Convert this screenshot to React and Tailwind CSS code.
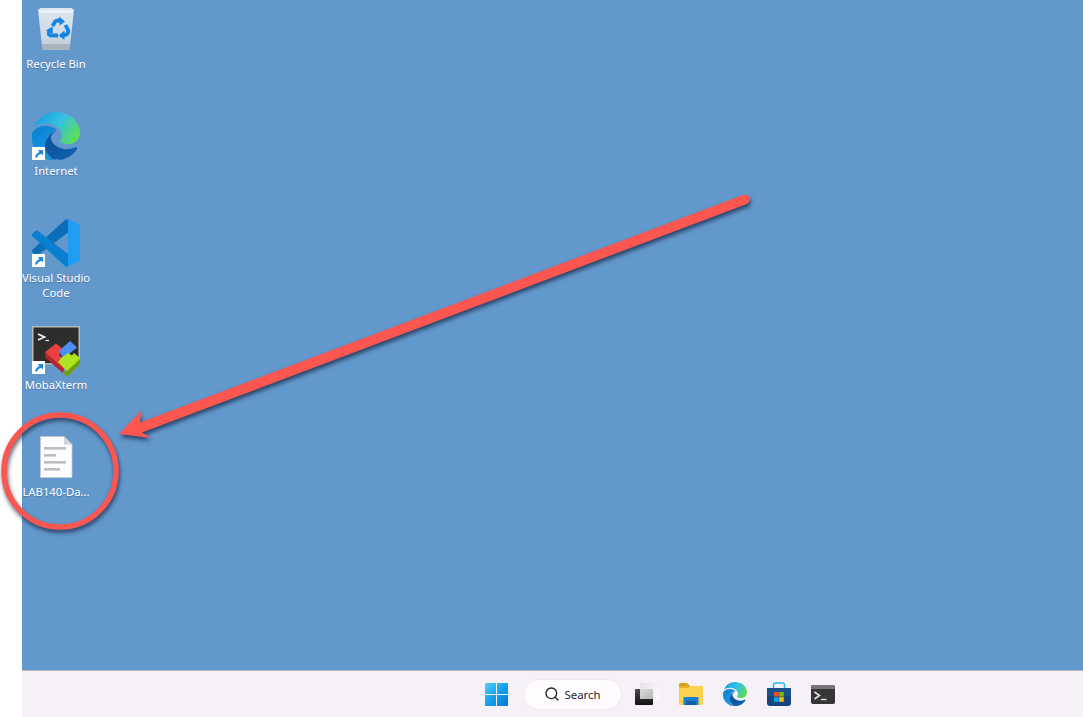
import { Search } from "lucide-react";

const EDGE_WAVE = "M21.86 17.86q.14 0 .25.12.1.13.1.25t-.11.33l-.32.46-.43.53-.44.5q-.21.25-.38.42l-.22.23q-.58.53-1.34 1.04-.76.51-1.6.91-.86.4-1.74.64t-1.67.24q-.9 0-1.69-.28-.8-.28-1.48-.78-.68-.5-1.22-1.17-.53-.66-.92-1.44-.38-.77-.58-1.6-.2-.83-.2-1.67 0-1 .32-1.96.33-.97.87-1.8.14.95.55 1.77.41.82 1.02 1.5.6.68 1.38 1.21.78.54 1.64.9.86.36 1.77.56.92.2 1.8.2 1.12 0 2.18-.24 1.06-.23 2.06-.72l.2-.1.2-.05z";
const EDGE_LEFT = "M6.36 16.59q0 1.1.27 2.15.27 1.06.78 2.03.51.96 1.24 1.77.74.82 1.66 1.4-1.47-.2-2.8-.74-1.33-.55-2.48-1.37-1.15-.83-2.08-1.9-.92-1.07-1.58-2.33T.36 14.94Q0 13.54 0 12.06q0-.81.32-1.49.31-.68.83-1.23.53-.55 1.2-.96.66-.4 1.35-.66.74-.27 1.5-.39.78-.12 1.55-.12.7 0 1.42.1.72.12 1.4.35.68.23 1.32.57.63.35 1.16.83-.35 0-.7.07-.33.07-.65.23v-.02q-.63.28-1.2.74-.57.46-1.05 1.04-.48.58-.87 1.26-.38.67-.65 1.39-.27.71-.42 1.44-.15.72-.15 1.38z";
const EDGE_TOP = "M11.96.06q1.7 0 3.33.39 1.63.38 3.07 1.15 1.43.77 2.62 1.93 1.18 1.16 1.98 2.7.49.94.76 1.96.28 1 .28 2.08 0 .89-.23 1.7-.24.8-.69 1.48-.45.68-1.1 1.22-.64.53-1.45.88-.54.24-1.11.36-.58.13-1.16.13-.42 0-.97-.03-.54-.03-1.1-.12-.55-.1-1.05-.28-.5-.19-.84-.5-.12-.09-.23-.24-.1-.16-.1-.33 0-.15.16-.35.16-.2.35-.5.2-.28.36-.68.16-.4.16-.95 0-1.06-.4-1.96-.4-.91-1.06-1.64-.66-.74-1.52-1.28-.86-.55-1.79-.89-.84-.3-1.72-.44-.87-.14-1.76-.14-1.55 0-3.06.45T.94 7.55q.71-1.74 1.81-3.13 1.1-1.38 2.52-2.35Q6.68 1.1 8.37.58q1.7-.52 3.58-.52Z";

function EdgeIcon({ id, className }) {
  return (
    <svg viewBox="0 0 24 24" className={className}>
      <defs>
        <linearGradient id={`${id}-top`} x1="0" y1="0.2" x2="1" y2="0.7">
          <stop offset="0" stopColor="#1b9de2" />
          <stop offset="0.5" stopColor="#35c1e1" />
          <stop offset="1" stopColor="#5ee04f" />
        </linearGradient>
        <linearGradient id={`${id}-left`} x1="0.2" y1="0" x2="0.7" y2="1">
          <stop offset="0" stopColor="#0a7fd4" />
          <stop offset="1" stopColor="#1a9fe6" />
        </linearGradient>
        <linearGradient id={`${id}-wave`} x1="0" y1="0" x2="1" y2="1">
          <stop offset="0" stopColor="#0c4f96" />
          <stop offset="1" stopColor="#0f66b4" />
        </linearGradient>
      </defs>
      <path d={EDGE_LEFT} fill={`url(#${id}-left)`} stroke="#0f86d8" strokeWidth="0.5" />
      <path d="M12.5 9.3 Q7.5 10.5 6.4 16.6 Q6.6 21 11 23.9 L14 23 Q9.5 20 8.6 15.5 Q9 11 12.5 9.3 Z" fill="#0c5aa6" />
      <path d={EDGE_WAVE} fill={`url(#${id}-wave)`} stroke="#0c5aa6" strokeWidth="0.6" />
      <path d={EDGE_TOP} fill={`url(#${id}-top)`} />
    </svg>
  );
}

function RecycleBinIcon() {
  return (
    <svg viewBox="0 0 48 48" className="h-12 w-12">
      <defs>
        <linearGradient id="bin-body" x1="0" y1="0" x2="0" y2="1">
          <stop offset="0" stopColor="#dde7f0" />
          <stop offset="0.7" stopColor="#cbd8e4" />
          <stop offset="1" stopColor="#bcc9d5" />
        </linearGradient>
      </defs>
      <path d="M6 4.5 L9 3 H39 L42 4.5 L38 41 Q37.8 45 35 45 H13 Q10.2 45 10 41 Z" fill="url(#bin-body)" />
      <path d="M7 5 L41 5 L40.5 8 L7.5 8 Z" fill="#eef3f8" opacity="0.8" />
      <path d="M10 39 H38 L37.6 45 H10.4 Z" fill="#aab4bd" />
      <g fill="none" stroke="#1285e6" strokeWidth="3.8">
        <path d="M20.5 21 L23 16.8 Q24 15.5 26 15.5 H28" />
        <path d="M33.5 20 L36 25 Q37 28.5 33.5 30 H32" />
        <path d="M26 30.5 H19 Q15.5 30 17 27 L18 25" />
      </g>
      <g fill="#1285e6">
        <path d="M27 11.5 L33 16.5 L27.5 20.5 Z" />
        <path d="M32.5 25.5 L26.5 30.5 L32.5 35 Z" />
        <path d="M14 25.5 L20.5 21.5 L21 28.5 Z" />
      </g>
    </svg>
  );
}

function VsCodeIcon() {
  return (
    <svg viewBox="0 0 24 24" className="h-12 w-12">
      <path d="M23.15 2.587L18.21.21a1.494 1.494 0 0 0-1.705.29L.327 15.26a1 1 0 0 0 .001 1.479L1.65 17.94a.999.999 0 0 0 1.276.057L23 3z" fill="#0a6fb8" />
      <path d="M.327 7.261A1 1 0 0 0 .326 8.74L16.5 23.5a1.492 1.492 0 0 0 1.704.29L22 20 L18.004 17.448 2.926 6.003a.999.999 0 0 0-1.276.057z" fill="#0a7fd0" />
      <path d="M18.21.21a1.494 1.494 0 0 0-1.705.29C17.2 -.1 18 .5 18 1.4V22.6c0 .9-.8 1.5-1.5.9a1.492 1.492 0 0 0 1.704.29l4.942-2.377A1.5 1.5 0 0 0 24 20.06V3.939a1.5 1.5 0 0 0-.85-1.352z" fill="#1f9df2" />
    </svg>
  );
}

function MobaIcon() {
  return (
    <svg viewBox="0 0 48 48" className="h-12 w-12 overflow-visible">
      <rect x="0.75" y="0.75" width="46.5" height="37" fill="#2d2e2c" stroke="#b9b9b6" strokeWidth="1.5" />
      <path d="M6 8 L12.5 11 L6 14" fill="none" stroke="#f2f2f2" strokeWidth="1.7" />
      <path d="M13.5 14.5 H17" stroke="#f2f2f2" strokeWidth="1.2" />
      {/* red piece */}
      <path d="M13 26 L13.5 32 L31 47 L33 40 Z" fill="#b3262b" />
      <path d="M13 26 L24 17.5 L31 23 L27 29 L36 36 L32 43 Z" fill="#e8403f" />
      {/* blue piece */}
      <path d="M27 25 L38 15 L45 21.5 L37 28 L36 31 L31 32 Z" fill="#4a90f2" />
      {/* lime piece */}
      <path d="M35 44 L48 32 L48 38 L35 51 L31 46 Z" fill="#6f9f10" />
      <path d="M29 32 L36 27 L40 29.5 L42 27 L48.5 32.5 L35 45 L26 36 Z" fill="#aee31f" />
    </svg>
  );
}

function FileIcon() {
  return (
    <svg viewBox="0 0 48 48" className="h-12 w-12">
      <path d="M8.5 3.5 H32 L40 11.5 V44.5 H8.5 Z" fill="#fdfcfe" stroke="#c9c9cc" strokeWidth="0.8" />
      <path d="M32 3.5 V11.5 H40 Z" fill="#d4d4d6" />
      <rect x="12" y="14" width="22" height="2.6" fill="#bcbdc0" />
      <rect x="12" y="21" width="12" height="2.6" fill="#bcbdc0" />
      <rect x="12" y="28" width="22" height="2.6" fill="#bcbdc0" />
      <rect x="12" y="35" width="16" height="2.6" fill="#bcbdc0" />
    </svg>
  );
}

function ShortcutBadge() {
  return (
    <span className="absolute bottom-0 left-0 flex h-[13px] w-[13px] items-center justify-center bg-white">
      <svg viewBox="0 0 13 13" className="h-[13px] w-[13px]">
        <path d="M3 10.5 Q3.5 6.5 7.5 5 L6 3 H11 V8.5 L9.3 6.8 Q6 7.5 5 10.5 Z" fill="#1a86e0" />
      </svg>
    </span>
  );
}

function DesktopIcon({ label, shortcut, children }) {
  return (
    <div className="flex h-[107px] w-[68px] flex-col items-center">
      <div className="relative h-12 w-12">
        {children}
        {shortcut && <ShortcutBadge />}
      </div>
      <span className="mt-[3px] whitespace-nowrap text-center text-[11.3px] leading-[15px] text-white [text-shadow:0_1px_1px_rgba(30,60,100,0.35)]">
        {label}
      </span>
    </div>
  );
}

function StartIcon() {
  return (
    <svg viewBox="0 0 23 23" className="h-[23px] w-[23px]">
      <defs>
        <linearGradient id="start-fill" x1="0" y1="0" x2="1" y2="1">
          <stop offset="0" stopColor="#52d0fb" />
          <stop offset="0.5" stopColor="#14a0ee" />
          <stop offset="1" stopColor="#0578d4" />
        </linearGradient>
      </defs>
      <path d="M1 0 H11 V11 H0 V1 Q0 0 1 0 Z M12 0 H22 Q23 0 23 1 V11 H12 Z M0 12 H11 V23 H1 Q0 23 0 22 Z M12 12 H23 V22 Q23 23 22 23 H12 Z" fill="url(#start-fill)" />
    </svg>
  );
}

function TaskViewIcon() {
  return (
    <svg viewBox="0 0 24 22" className="h-[22px] w-6">
      <defs>
        <linearGradient id="tv-dark" x1="0" y1="0" x2="0" y2="1">
          <stop offset="0" stopColor="#4a4a4a" />
          <stop offset="1" stopColor="#111111" />
        </linearGradient>
        <linearGradient id="tv-light" x1="0" y1="0" x2="1" y2="1">
          <stop offset="0" stopColor="#e6e4e7" />
          <stop offset="1" stopColor="#fbfafb" />
        </linearGradient>
        <linearGradient id="tv-mid" x1="0" y1="0" x2="1" y2="1">
          <stop offset="0" stopColor="#dcdcdc" />
          <stop offset="1" stopColor="#b4b4b4" />
        </linearGradient>
      </defs>
      <rect x="0" y="6" width="18" height="16" rx="1" fill="url(#tv-dark)" />
      <rect x="5" y="0" width="19" height="16" rx="1" fill="url(#tv-light)" />
      <rect x="5" y="6" width="13" height="10" fill="url(#tv-mid)" />
    </svg>
  );
}

function ExplorerIcon() {
  return (
    <svg viewBox="0 0 24 22" className="h-[22px] w-6">
      <path d="M0 1.5 Q0 0 1.5 0 H8 L11 3 H0 Z" fill="#d9a013" />
      <path d="M0 3 H10 L12 4 H24 V6 H0 Z" fill="#e6b12c" />
      <path d="M0 5 H9 L12 3 H23 Q24 3 24 4 V21 Q24 22 23 22 H1 Q0 22 0 21 Z" fill="#fbd24d" />
      <path d="M4.5 22 V15 Q4.5 14 5.5 14 H18.5 Q19.5 14 19.5 15 V22 Z" fill="#1b7fcf" />
      <rect x="7" y="18" width="10" height="4" fill="#0f5fa8" />
    </svg>
  );
}

function StoreIcon() {
  return (
    <svg viewBox="0 0 24 24" className="h-6 w-6">
      <path d="M6.5 7 V3 Q6.5 1 8.5 1 H15.5 Q17.5 1 17.5 3 V7" fill="none" stroke="#2ab7ef" strokeWidth="1.5" />
      <path d="M0 6 H24 V21 Q24 24 21 24 H3 Q0 24 0 21 Z" fill="#15467c" />
      <path d="M0 6 H24 V14 H0 Z" fill="#1c5a98" opacity="0.6" />
      <rect x="7" y="10" width="4.6" height="4.6" fill="#f25022" />
      <rect x="12.2" y="10" width="4.6" height="4.6" fill="#7fba00" />
      <rect x="7" y="15.2" width="4.6" height="4.6" fill="#00a4ef" />
      <rect x="12.2" y="15.2" width="4.6" height="4.6" fill="#ffb900" />
    </svg>
  );
}

function TerminalIcon() {
  return (
    <svg viewBox="0 0 24 19" className="h-[19px] w-6">
      <rect x="0" y="0" width="24" height="19" rx="2" fill="#363636" />
      <path d="M0 4 V2 Q0 0 2 0 H22 Q24 0 24 2 V4 Z" fill="#767676" />
      <path d="M3.5 7 L8.5 10.5 L3.5 14" fill="none" stroke="#e0e0e0" strokeWidth="1.6" />
      <path d="M10 14.5 H15.5" stroke="#e0e0e0" strokeWidth="1.4" />
    </svg>
  );
}

function TaskbarSlot({ children }) {
  return <div className="flex h-6 w-11 items-center justify-center">{children}</div>;
}

function App() {
  return (
    <div className="relative flex h-[717px] w-[1083px] overflow-hidden bg-white font-['Noto_Sans',sans-serif]">
      <div className="ml-[22px] flex h-full flex-1 flex-col">
        {/* Desktop */}
        <div className="flex-1 bg-[#6398cc] pt-[5px]">
          <DesktopIcon label="Recycle Bin">
            <RecycleBinIcon />
          </DesktopIcon>
          <DesktopIcon label="Internet" shortcut>
            <EdgeIcon id="edge-desktop" className="h-12 w-12" />
          </DesktopIcon>
          <DesktopIcon label={<>Visual Studio<br />Code</>} shortcut>
            <VsCodeIcon />
          </DesktopIcon>
          <DesktopIcon label="MobaXterm" shortcut>
            <MobaIcon />
          </DesktopIcon>
          <DesktopIcon label="LAB140-Da...">
            <FileIcon />
          </DesktopIcon>
        </div>

        {/* Taskbar */}
        <div className="flex h-[47px] items-center border-t border-[#b9b6bf] bg-[#f5f1f6] pl-[463px]">
          <StartIcon />
          <div className="ml-[15px] flex h-[31px] w-[99px] items-center justify-center gap-[4px] rounded-full border border-[#eeeaef] bg-[#fefcfe] text-[11.4px] text-[#1f1f1f]">
            <Search className="h-4 w-4" strokeWidth={2} />
            <span className="pt-[1px]">Search</span>
          </div>
          <div className="ml-[3px] flex items-center">
            <TaskbarSlot><TaskViewIcon /></TaskbarSlot>
            <TaskbarSlot><ExplorerIcon /></TaskbarSlot>
            <TaskbarSlot><EdgeIcon id="edge-taskbar" className="h-6 w-6" /></TaskbarSlot>
            <TaskbarSlot><StoreIcon /></TaskbarSlot>
            <TaskbarSlot><TerminalIcon /></TaskbarSlot>
          </div>
        </div>
      </div>

      {/* Annotation drawn over the screenshot */}
      <svg
        viewBox="0 0 1083 717"
        className="pointer-events-none absolute inset-0 h-[717px] w-[1083px] drop-shadow-[1px_3px_2px_rgba(15,30,60,0.7)]"
      >
        <circle cx="60" cy="471" r="56" fill="none" stroke="#fc5650" strokeWidth="5.5" />
        <path
          d="M119 434 L141 411 L140 422.5 L743 195 Q748.5 193.5 749.5 198 Q750.5 202.5 745.5 204.5 L142 432.5 L151 438 Z"
          fill="#fc5650"
        />
      </svg>
    </div>
  );
}

export default App;
